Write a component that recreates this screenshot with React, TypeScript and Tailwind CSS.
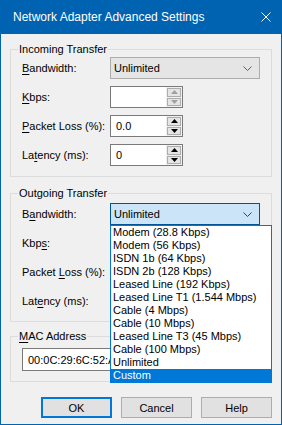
import React from 'react';

const options = [
  'Modem (28.8 Kbps)',
  'Modem (56 Kbps)',
  'ISDN 1b (64 Kbps)',
  'ISDN 2b (128 Kbps)',
  'Leased Line (192 Kbps)',
  'Leased Line T1 (1.544 Mbps)',
  'Cable (4 Mbps)',
  'Cable (10 Mbps)',
  'Leased Line T3 (45 Mbps)',
  'Cable (100 Mbps)',
  'Unlimited',
  'Custom',
];

const Chevron = ({ color = '#606060' }: { color?: string }) => (
  <svg width="9" height="5" viewBox="0 0 9 5" className="shrink-0">
    <polyline points="0.5,0.5 4.5,4.5 8.5,0.5" fill="none" stroke={color} strokeWidth="1" />
  </svg>
);

const Label = ({ pre, key_, post }: { pre: string; key_: string; post: string }) => (
  <span className="w-[88px] shrink-0 whitespace-nowrap">
    {pre}
    <span className="underline underline-offset-[2px]">{key_}</span>
    {post}
  </span>
);

const Arrow = ({ up, disabled }: { up?: boolean; disabled?: boolean }) => (
  <svg width="7" height="4" viewBox="0 0 7 4">
    <polygon points={up ? '0,4 7,4 3.5,0' : '0,0 7,0 3.5,4'} fill={disabled ? '#a0a0a0' : '#000'} />
  </svg>
);

const SpinBox = ({ value, disabled }: { value: string; disabled?: boolean }) => (
  <div className="flex h-[22px]">
    <div className="w-[56px] h-full border border-[#7a7a7a] border-r-0 bg-white px-[5px] flex items-center">{value}</div>
    <div className="w-[17px] h-full flex flex-col border border-[#7a7a7a] border-l-0 bg-[#f0f0f0]">
      <div className="flex-1 m-[1px] mb-0 border border-[#adadad] bg-[#e5e5e5] flex items-center justify-center">
        <Arrow up disabled={disabled} />
      </div>
      <div className="flex-1 m-[1px] border border-[#adadad] bg-[#e5e5e5] flex items-center justify-center">
        <Arrow disabled={disabled} />
      </div>
    </div>
  </div>
);

const Combo = ({ focused }: { focused?: boolean }) => (
  <div
    className={
      focused
        ? 'w-[150px] h-[22px] border border-[#005499] bg-[#cce4f7] flex items-center justify-between pl-[3px] pr-[7px]'
        : 'w-[150px] h-[22px] border border-[#adadad] bg-[#e5e5e5] flex items-center justify-between pl-[3px] pr-[7px]'
    }
  >
    <span>Unlimited</span>
    <Chevron color={focused ? '#404040' : '#606060'} />
  </div>
);

export default function App() {
  return (
    <div
      className="w-[282px] h-[425px] bg-[#0063b1] flex flex-col text-[11px] text-black leading-[16px]"
      style={{ fontFamily: '"Liberation Sans", Arial, sans-serif' }}
    >
      <div className="h-[34px] shrink-0 flex items-center justify-between pl-[13px] pr-[11px] text-white text-[12px]">
        <span>Network Adapter Advanced Settings</span>
        <svg width="10" height="10" viewBox="0 0 10 10">
          <path d="M0.5 0.5 L9.5 9.5 M9.5 0.5 L0.5 9.5" stroke="#fff" strokeWidth="1" />
        </svg>
      </div>
      <div className="flex-1 mx-[1px] mb-[1px] bg-[#f0f0f0] px-[9px] pt-[7px] flex flex-col">
        <fieldset className="border border-[#dcdcdc] pl-[11px] pb-[10px]">
          <legend className="ml-[-4px] px-[1px] leading-[16px]">Incoming Transfer</legend>
          <div className="flex flex-col gap-[7px]">
            <div className="flex items-center h-[22px]">
              <Label pre="" key_="B" post="andwidth:" />
              <Combo />
            </div>
            <div className="flex items-center h-[22px]">
              <Label pre="" key_="K" post="bps:" />
              <SpinBox value="" disabled />
            </div>
            <div className="flex items-center h-[22px]">
              <Label pre="" key_="P" post="acket Loss (%):" />
              <SpinBox value="0.0" />
            </div>
            <div className="flex items-center h-[22px]">
              <Label pre="La" key_="t" post="ency (ms):" />
              <SpinBox value="0" />
            </div>
          </div>
        </fieldset>

        <fieldset className="mt-[8px] border border-[#dcdcdc] pl-[11px] pb-[9px] pt-[2px]">
          <legend className="ml-[-4px] px-[1px] leading-[16px]">Outgoing Transfer</legend>
          <div className="flex flex-col gap-[7px]">
            <div className="flex items-center h-[22px]">
              <Label pre="B" key_="a" post="ndwidth:" />
              <div className="relative">
                <Combo focused />
                <div className="absolute left-0 top-full w-[162px] border border-[#0078d7] bg-white z-10">
                  {options.map((o) => (
                    <div
                      key={o}
                      className={
                        o === 'Custom'
                          ? 'h-[13px] leading-[13px] pl-[2px] whitespace-nowrap bg-[#0078d7] text-white'
                          : 'h-[13px] leading-[13px] pl-[2px] whitespace-nowrap'
                      }
                    >
                      {o}
                    </div>
                  ))}
                </div>
              </div>
            </div>
            <div className="flex items-center h-[22px]">
              <Label pre="Kbp" key_="s" post=":" />
              <SpinBox value="" />
            </div>
            <div className="flex items-center h-[22px]">
              <Label pre="Packet " key_="L" post="oss (%):" />
              <SpinBox value="" />
            </div>
            <div className="flex items-center h-[22px]">
              <Label pre="Lat" key_="e" post="ncy (ms):" />
              <SpinBox value="" />
            </div>
          </div>
        </fieldset>

        <fieldset className="mt-[6px] border border-[#dcdcdc] px-[11px] pb-[10px] pt-[4px]">
          <legend className="ml-[-4px] px-[1px] leading-[16px]">
            <span className="underline underline-offset-[2px]">M</span>AC Address
          </legend>
          <div className="h-[23px] border border-[#7a7a7a] bg-white flex items-center px-[5px]">00:0C:29:6C:52:A1</div>
        </fieldset>

        <div className="mt-[15px] flex justify-end gap-[9px]">
          <button className="w-[71px] h-[21px] border-2 border-[#0078d7] bg-[#e1e1e1] leading-[16px]">OK</button>
          <button className="w-[71px] h-[21px] border border-[#adadad] bg-[#e1e1e1] leading-[16px]">Cancel</button>
          <button className="w-[71px] h-[21px] border border-[#adadad] bg-[#e1e1e1] leading-[16px]">Help</button>
        </div>
      </div>
    </div>
  );
}
